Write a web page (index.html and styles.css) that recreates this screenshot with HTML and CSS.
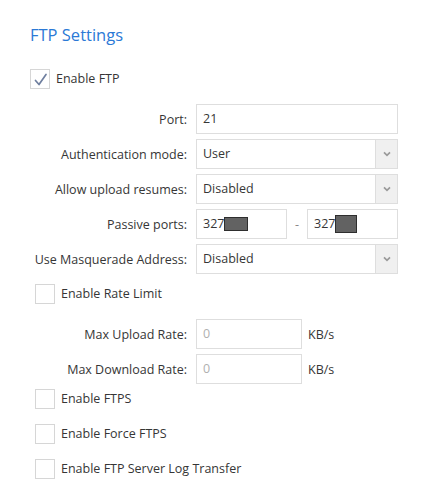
FILE: index.html
```html
<!DOCTYPE html>
<html>
<head>
<meta charset="utf-8">
<link rel="stylesheet" href="styles.css">
</head>
<body>
<div class="page">
  <h1 class="title">FTP Settings</h1>

  <label class="check check-main">
    <span class="box"><svg width="18" height="18" viewBox="0 0 18 18"><polyline points="4.5,10.5 8,14.5 15,4.5" fill="none" stroke="#6f7f9f" stroke-width="1.7" stroke-linecap="round" stroke-linejoin="round"/></svg></span>
    <span class="check-text">Enable FTP</span>
  </label>

  <div class="form">
    <div class="row">
      <span class="label">Port:</span>
      <div class="field"><span class="val">21</span></div>
    </div>
    <div class="row">
      <span class="label">Authentication mode:</span>
      <div class="field select"><span class="val">User</span><span class="arrow"><svg width="8" height="6" viewBox="0 0 8 6"><polyline points="1,1.3 4,4.3 7,1.3" fill="none" stroke="#9a9a9a" stroke-width="1.7"/></svg></span></div>
    </div>
    <div class="row">
      <span class="label">Allow upload resumes:</span>
      <div class="field select"><span class="val">Disabled</span><span class="arrow"><svg width="8" height="6" viewBox="0 0 8 6"><polyline points="1,1.3 4,4.3 7,1.3" fill="none" stroke="#9a9a9a" stroke-width="1.7"/></svg></span></div>
    </div>
    <div class="row">
      <span class="label">Passive ports:</span>
      <div class="ports">
        <div class="field port"><span class="val">327</span><span class="redact r1"></span></div>
        <span class="dash">-</span>
        <div class="field port"><span class="val">327</span><span class="redact r2"></span></div>
      </div>
    </div>
    <div class="row">
      <span class="label">Use Masquerade Address:</span>
      <div class="field select"><span class="val">Disabled</span><span class="arrow"><svg width="8" height="6" viewBox="0 0 8 6"><polyline points="1,1.3 4,4.3 7,1.3" fill="none" stroke="#9a9a9a" stroke-width="1.7"/></svg></span></div>
    </div>
  </div>

  <label class="check check-sub check-rate">
    <span class="box"></span>
    <span class="check-text">Enable Rate Limit</span>
  </label>

  <div class="form form-rate">
    <div class="row">
      <span class="label">Max Upload Rate:</span>
      <div class="rate"><div class="field short"><span class="val ph">0</span></div><span class="unit">KB/s</span></div>
    </div>
    <div class="row">
      <span class="label">Max Download Rate:</span>
      <div class="rate"><div class="field short"><span class="val ph">0</span></div><span class="unit">KB/s</span></div>
    </div>
  </div>

  <label class="check check-sub check-ftps">
    <span class="box"></span>
    <span class="check-text">Enable FTPS</span>
  </label>
  <label class="check check-sub check-gap">
    <span class="box"></span>
    <span class="check-text">Enable Force FTPS</span>
  </label>
  <label class="check check-sub check-gap">
    <span class="box"></span>
    <span class="check-text">Enable FTP Server Log Transfer</span>
  </label>
</div>
</body>
</html>
```

FILE: styles.css
```css
html, body {
  margin: 0;
  padding: 0;
  background: #ffffff;
}

body {
  font-family: "Open Sans", "Noto Sans", sans-serif;
  font-size: 12.5px;
  color: #363636;
}

.page {
  padding: 25px 0 0 0;
}

.title {
  margin: 0 0 0 30px;
  font-size: 16.5px;
  font-weight: 400;
  line-height: 20px;
  color: #2b79d6;
}

.check {
  display: flex;
  align-items: center;
  height: 20px;
}

.check-main {
  margin: 24px 0 0 30px;
}

.check-sub {
  margin-left: 35px;
}

.check-rate {
  margin-top: 10px;
}

.check-ftps {
  margin-top: 5px;
}

.check-gap {
  margin-top: 15px;
}

.box {
  width: 18px;
  height: 18px;
  border: 1px solid #d6d6d6;
  background: #fff;
  display: flex;
  align-items: center;
  justify-content: center;
  flex: none;
}

.box svg {
  display: block;
}

.check-text {
  margin-left: 6px;
  line-height: 20px;
}

.form {
  display: flex;
  flex-direction: column;
  gap: 5px;
  margin-top: 15px;
}

.row {
  display: grid;
  grid-template-columns: 187px 202px;
  column-gap: 9px;
  align-items: center;
  height: 30px;
}

.label {
  text-align: right;
  white-space: nowrap;
}

.field {
  box-sizing: border-box;
  height: 30px;
  border: 1px solid #dedede;
  background: #fff;
  display: flex;
  align-items: center;
  padding-left: 6px;
}

.val {
  line-height: 28px;
  color: #363636;
}

.val.ph {
  color: #b0b0b0;
}

.select {
  padding-right: 0;
  justify-content: space-between;
}

.arrow {
  width: 21px;
  height: 28px;
  border-left: 1px solid #dedede;
  background: #f0f0f0;
  display: flex;
  align-items: center;
  justify-content: center;
}

.arrow svg {
  display: block;
}

.ports {
  display: flex;
  align-items: center;
}

.port {
  width: 91px;
}

.dash {
  width: 20px;
  text-align: center;
  color: #888;
}

.redact {
  display: inline-block;
  box-sizing: border-box;
  background: #626262;
  border: 1px solid #2e2e2e;
}

.r1 {
  width: 24px;
  height: 14px;
}

.r2 {
  width: 22px;
  height: 18px;
}

.form-rate {
  margin-top: 15px;
}

.rate {
  display: flex;
  align-items: center;
}

.short {
  width: 106px;
}

.unit {
  margin-left: 6px;
}
```
